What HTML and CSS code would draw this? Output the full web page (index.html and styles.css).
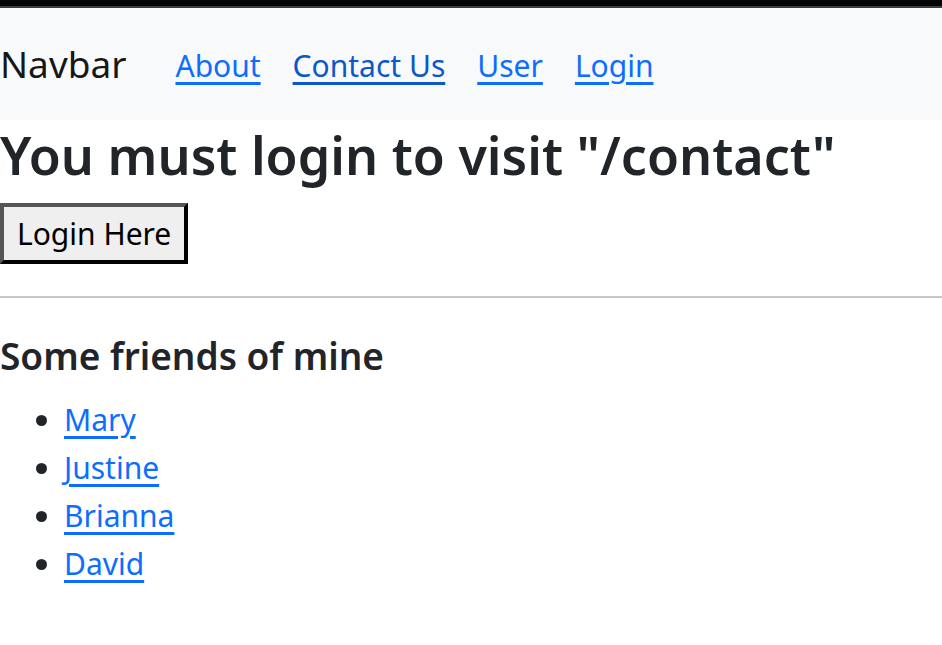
FILE: index.html
```html
<!DOCTYPE html>
<html lang="en">
<head>
<meta charset="utf-8">
<title>Navbar</title>
<link rel="stylesheet" href="styles.css">
</head>
<body>
<div class="topstrip"></div>
<nav class="navbar">
  <a class="brand" href="#">Navbar</a>
  <a class="nav-link" href="#">About</a>
  <a class="nav-link visited" href="#">Contact Us</a>
  <a class="nav-link" href="#">User</a>
  <a class="nav-link" href="#">Login</a>
</nav>
<h1 class="title">You must login to visit "/contact"</h1>
<button class="login-btn">Login Here</button>
<hr class="divider">
<h4 class="subtitle">Some friends of mine</h4>
<ul class="friends">
  <li><a href="#">Mary</a></li>
  <li><a href="#">Justine</a></li>
  <li><a href="#">Brianna</a></li>
  <li><a href="#">David</a></li>
</ul>
</body>
</html>
```
FILE: styles.css
```css
html, body {
  margin: 0;
  padding: 0;
}
body {
  font-family: "Noto Sans", "Open Sans", sans-serif;
  font-size: 30px;
  line-height: 48px;
  color: #212529;
  background: #fff;
}
a {
  color: #0d6efd;
  text-decoration: underline;
  text-decoration-thickness: 3px;
  text-underline-offset: 5px;
}
.topstrip {
  height: 6px;
  background: #050505;
  border-bottom: 2px solid #3b3c40;
}
.navbar {
  display: flex;
  align-items: center;
  background: #f8f9fa;
  height: 112px;
  padding: 0;
}
.brand {
  color: rgba(0, 0, 0, 0.92);
  text-decoration: none;
  font-size: 37px;
  margin-right: 33px;
  line-height: 60px;
}
.nav-link {
  padding: 0 16px;
  margin-top: 4px;
}
.nav-link.visited {
  color: #0a58ca;
}
.title {
  margin: 0 0 13px 0;
  font-size: 52px;
  font-weight: 600;
  line-height: 70px;
}
.login-btn {
  font-family: inherit;
  font-size: 30px;
  line-height: 48px;
  color: #000;
  background: #efefef;
  border-style: solid;
  border-width: 4px;
  border-color: #555 #000 #000 #555;
  padding: 3px 13px 2px;
  margin: 0;
}
.divider {
  margin: 32px 0;
  border: 0;
  border-top: 2px solid #c8c8c8;
  height: 0;
}
.subtitle {
  margin: 0 0 14px 0;
  font-size: 37px;
  font-weight: 600;
  line-height: 52px;
}
.friends {
  margin: 0;
  padding-left: 64px;
}
.friends li {
  line-height: 48px;
}
```
